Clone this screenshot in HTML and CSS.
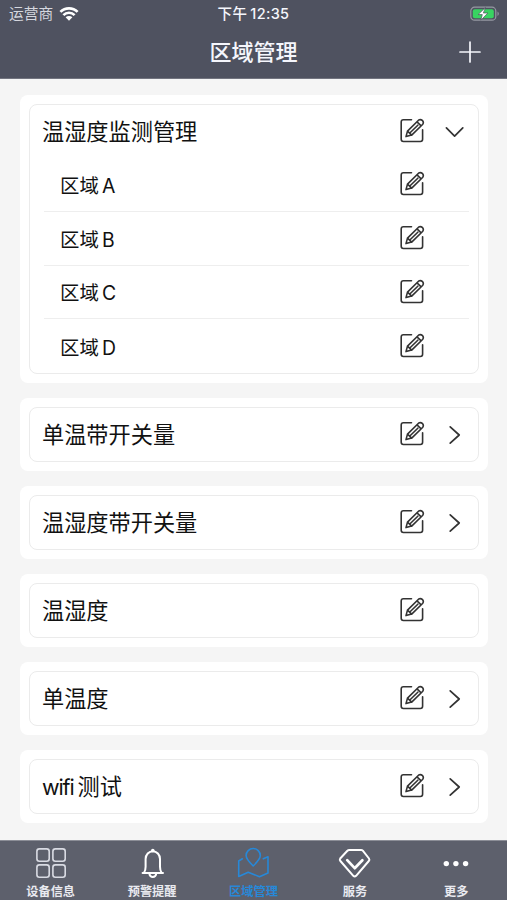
FILE: index.html
```html
<!DOCTYPE html>
<html lang="zh-CN">
<head>
<meta charset="utf-8">
<title>区域管理</title>
<link rel="stylesheet" href="styles.css">
</head>
<body>
<svg class="defs" aria-hidden="true">
  <symbol id="edit" viewBox="0 0 26 26"><path d="M11.5 1.8H3.4Q1.2 1.8 1.2 4V21.3Q1.2 23.5 3.4 23.5H20.4Q22.6 23.5 22.6 21.3V11.8"/><path d="M6 18.6l1.5-5.5L18.5 2.2a3 3 0 0 1 4.3 4L11.7 17.1zM7.5 13.1l4.2 4M17 3.8l4.2 4M9.8 15l8-7.8"/></symbol>
  <symbol id="right" viewBox="0 0 20 20"><path d="M5.2 1.8l9 8.2-9 8.2"/></symbol>
  <symbol id="down" viewBox="0 0 20 20"><path d="M1.4 5.8l8.2 8.3 8.2-8.3"/></symbol>
</svg>
<header>
  <div class="status">
    <div class="carrier"><span>运营商</span><svg width="20" height="14" viewBox="0 0 20 14"><path class="arc" d="M1.4 4.9a12.2 12.2 0 0 1 17.2 0M4.4 8.1a7.9 7.9 0 0 1 11.2 0"/><path class="fill" d="M6.6 10.3a4.9 4.9 0 0 1 6.8 0L10 13.7z"/></svg></div>
    <time>下午 12:35</time>
    <svg class="battery" width="31" height="16" viewBox="0 0 31 16"><rect class="shell" x=".8" y="1.2" width="25" height="13" rx="3.8"/><path class="tip" d="M27.5 5.5q2.7 2.2 0 4.6z"/><rect class="charge" x="2.8" y="3.2" width="21" height="9" rx="2"/><path class="bolt" d="M15.2 1.7L8.1 8.6h4.2l-1.5 5.6 7.1-7.2h-4.2z"/></svg>
  </div>
  <div class="titlebar"><h1>区域管理</h1><svg class="plus" width="22" height="22" viewBox="0 0 22 22"><path d="M11 1v20M1 11h20"/></svg></div>
</header>
<main>
  <section class="card"><div class="panel">
    <div class="row"><h2>温湿度监测管理</h2><svg class="edit"><use href="#edit"/></svg><svg class="arrow"><use href="#down"/></svg></div>
    <ul>
      <li><span>区域 A</span><svg class="edit"><use href="#edit"/></svg></li>
      <li><span>区域 B</span><svg class="edit"><use href="#edit"/></svg></li>
      <li><span>区域 C</span><svg class="edit"><use href="#edit"/></svg></li>
      <li><span>区域 D</span><svg class="edit"><use href="#edit"/></svg></li>
    </ul>
  </div></section>
  <section class="card"><div class="panel"><div class="row"><h2>单温带开关量</h2><svg class="edit"><use href="#edit"/></svg><svg class="arrow"><use href="#right"/></svg></div></div></section>
  <section class="card"><div class="panel"><div class="row"><h2>温湿度带开关量</h2><svg class="edit"><use href="#edit"/></svg><svg class="arrow"><use href="#right"/></svg></div></div></section>
  <section class="card"><div class="panel"><div class="row"><h2>温湿度</h2><svg class="edit"><use href="#edit"/></svg><span class="arrow"></span></div></div></section>
  <section class="card"><div class="panel"><div class="row"><h2>单温度</h2><svg class="edit"><use href="#edit"/></svg><svg class="arrow"><use href="#right"/></svg></div></div></section>
  <section class="card"><div class="panel"><div class="row"><h2><span class="latin">wifi</span>测试</h2><svg class="edit"><use href="#edit"/></svg><svg class="arrow"><use href="#right"/></svg></div></div></section>
</main>
<nav>
  <a class="tab"><svg class="thin grid" viewBox="0 0 34 34"><rect x="2.9" y="2.9" width="12.3" height="12.3" rx="2.5"/><rect x="18.9" y="2.9" width="12.3" height="12.3" rx="2.5"/><rect x="2.9" y="18.9" width="12.3" height="12.3" rx="2.5"/><rect x="18.9" y="18.9" width="12.3" height="12.3" rx="2.5"/></svg><span>设备信息</span></a>
  <a class="tab"><svg viewBox="0 0 34 34"><path d="M7.6 27H28M9 26.8q1.6-2.3 1.6-6V13a7.2 7.8 0 0 1 14.4 0v7.8q0 3.7 1.6 6M14.4 27.6a3.4 3.4 0 0 0 6.8 0"/><circle class="solid" cx="17.8" cy="4.6" r="1.8"/></svg><span>预警提醒</span></a>
  <a class="tab active"><svg class="thin" viewBox="0 0 34 34"><path d="M6.4 12.8L2.7 15v15.5l9.5-4.3 11.3 4.5 8.5-3.6V10.8l-4.7 2M17.2 20C12.5 15.5 10.1 12.8 10.1 9.6a7.1 7.1 0 0 1 14.2 0C24.3 12.8 21.9 15.5 17.2 20z"/></svg><span>区域管理</span></a>
  <a class="tab"><svg viewBox="0 0 34 34"><path d="M11.2 3.9h11.9q1 0 1.7.8l6.2 7.8q.9 1.3-.2 2.5L18.1 29.8q-1.4 1.3-2.8 0L2.4 15q-1.1-1.2-.2-2.5l7.2-7.8q.8-.8 1.8-.8z"/><path class="heavy" d="M9.2 14.2l7.5 8 7.7-8"/></svg><span>服务</span></a>
  <a class="tab"><svg viewBox="0 0 34 34"><g class="solid"><circle cx="7.3" cy="17.6" r="2.7"/><circle cx="16.9" cy="17.6" r="2.7"/><circle cx="26.6" cy="17.6" r="2.7"/></g></svg><span>更多</span></a>
</nav>
</body>
</html>
```
FILE: styles.css
```css
* { box-sizing: border-box; margin: 0; padding: 0; }
body { height: 900px; display: flex; flex-direction: column; overflow: hidden; background: #f5f5f5; color: #111; font-family: Inter, "Noto Sans CJK SC", sans-serif; }
svg { fill: none; stroke: currentColor; stroke-linecap: round; stroke-linejoin: round; flex: none; }
.defs { position: absolute; width: 0; height: 0; }
header { height: 79px; flex: none; background: #4f5260; color: #f5f6fc; border-bottom: 1px solid #72747f; }
.status { height: 27px; display: grid; grid-template-columns: 1fr auto 1fr; align-items: center; padding: 0 6px; font-size: 14.7px; line-height: 27px; }
.carrier { display: flex; align-items: center; gap: 6px; color: #d5d7df; padding: 1px 0 0 3px; }
.carrier svg { color: #fff; margin-top: -2px; }
.arc { stroke-width: 2.7; stroke-linecap: butt; }
.fill { fill: currentColor; stroke: none; }
time { font-size: 14.5px; font-weight: 500; letter-spacing: .35px; word-spacing: -1.2px; padding-bottom: 1px; }
.battery { justify-self: end; margin-top: -1px; }
.shell { stroke: #9699a2; stroke-width: 1.2; }
.tip { fill: #9699a2; stroke: none; }
.charge { fill: #38d461; stroke: none; }
.bolt { fill: #fff; stroke: #4f5260; stroke-width: .7; }
.titlebar { height: 50px; display: grid; grid-template-columns: 1fr auto 1fr; align-items: center; padding: 0 26px; }
h1 { grid-column: 2; font-size: 22px; line-height: 50px; font-weight: 500; }
.plus { justify-self: end; stroke-width: 1.7; }
main { flex: 1; padding: 16px 19px 0 20px; display: flex; flex-direction: column; gap: 15px; }
.card { background: #fff; border-radius: 8px; padding: 9px; }
.panel { border: 1px solid #ebebeb; border-radius: 8px; }
.row { height: 53px; display: flex; align-items: center; padding: 0 13px 0 12px; }
h2 { flex: 1; font-size: 22.2px; line-height: 53px; font-weight: 400; }
.latin { font-size: 21.5px; letter-spacing: -1.1px; margin-right: 4px; }
.edit { width: 26px; height: 26px; stroke-width: 1.6; color: #333; }
.row .edit { margin-top: -1px; }
.arrow { width: 20px; height: 20px; margin-left: 19px; stroke-width: 1.7; color: #333; }
ul { list-style: none; padding: 0 9px 0 14px; }
li { height: 53.75px; display: flex; align-items: center; justify-content: space-between; padding: 0 43px 0 16px; border-bottom: 1px solid #eee; font-size: 19.4px; word-spacing: -2.3px; }
li:last-child { border: 0; }
nav { flex: none; height: 60px; border-top: 1px solid #8c8e97; background: #5d606c; color: #fff; display: grid; grid-template-columns: repeat(5, 1fr); }
.tab { display: flex; flex-direction: column; align-items: center; padding-top: 5px; font-size: 12.2px; line-height: 18px; font-weight: 700; }
.tab svg { width: 34px; height: 34px; stroke-width: 2; }
.tab span { margin-top: 3px; color: #e9eaf0; }
.tab .thin { stroke-width: 1.6; }
.tab .grid { color: #d9dbe3; }
.tab .heavy { stroke-width: 2.7; }
.tab .solid { fill: currentColor; stroke: none; }
.tab.active, .tab.active span { color: #2788d8; }
```
